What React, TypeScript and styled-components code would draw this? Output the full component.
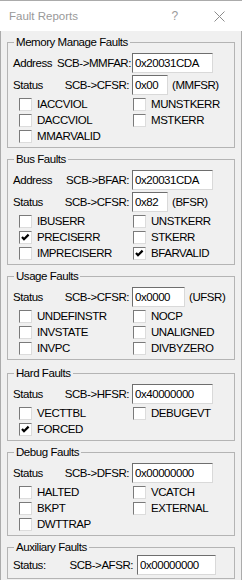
import React from 'react'
import styled, { createGlobalStyle } from 'styled-components'

const GlobalStyle = createGlobalStyle`
  html, body {
    margin: 0;
    padding: 0;
    background: #f0f0f0;
  }
  body {
    font-family: "Liberation Sans", Arial, sans-serif;
    font-size: 11.5px;
    color: #000;
  }
`

type Field = { name: string; reg: string; value: string; width: number; suffix?: string }
type Flag = { label: string; checked?: boolean }
type GroupData = {
  title: string
  fields: Field[]
  flags: Flag[]
  keyWidth?: number
  spaceAbove?: number
  tight?: boolean
}

const groups: GroupData[] = [
  {
    title: 'Memory Manage Faults',
    spaceAbove: 0,
    fields: [
      { name: 'Address', reg: 'SCB->MMFAR:', value: '0x20031CDA', width: 81 },
      { name: 'Status', reg: 'SCB->CFSR:', value: '0x00', width: 36, suffix: '(MMFSR)' },
    ],
    flags: [
      { label: 'IACCVIOL' },
      { label: 'MUNSTKERR' },
      { label: 'DACCVIOL' },
      { label: 'MSTKERR' },
      { label: 'MMARVALID' },
    ],
  },
  {
    title: 'Bus Faults',
    fields: [
      { name: 'Address', reg: 'SCB->BFAR:', value: '0x20031CDA', width: 81 },
      { name: 'Status', reg: 'SCB->CFSR:', value: '0x82', width: 36, suffix: '(BFSR)' },
    ],
    flags: [
      { label: 'IBUSERR' },
      { label: 'UNSTKERR' },
      { label: 'PRECISERR', checked: true },
      { label: 'STKERR' },
      { label: 'IMPRECISERR' },
      { label: 'BFARVALID', checked: true },
    ],
  },
  {
    title: 'Usage Faults',
    fields: [{ name: 'Status', reg: 'SCB->CFSR:', value: '0x0000', width: 53, suffix: '(UFSR)' }],
    flags: [
      { label: 'UNDEFINSTR' },
      { label: 'NOCP' },
      { label: 'INVSTATE' },
      { label: 'UNALIGNED' },
      { label: 'INVPC' },
      { label: 'DIVBYZERO' },
    ],
  },
  {
    title: 'Hard Faults',
    spaceAbove: 13,
    fields: [{ name: 'Status', reg: 'SCB->HFSR:', value: '0x40000000', width: 81 }],
    flags: [{ label: 'VECTTBL' }, { label: 'DEBUGEVT' }, { label: 'FORCED', checked: true }],
  },
  {
    title: 'Debug Faults',
    fields: [{ name: 'Status', reg: 'SCB->DFSR:', value: '0x00000000', width: 81 }],
    flags: [
      { label: 'HALTED' },
      { label: 'VCATCH' },
      { label: 'BKPT' },
      { label: 'EXTERNAL' },
      { label: 'DWTTRAP' },
    ],
  },
  {
    title: 'Auxiliary Faults',
    keyWidth: 76,
    tight: true,
    fields: [{ name: 'Status:', reg: 'SCB->AFSR:', value: '0x00000000', width: 79 }],
    flags: [],
  },
]

const Window = styled.div`
  width: 242px;
  height: 580px;
  display: flex;
  flex-direction: column;
  background: #f0f0f0;
  overflow: hidden;
  letter-spacing: -0.45px;
`

const TitleBar = styled.div`
  height: 30px;
  flex: none;
  border-top: 1px solid #ababab;
  background: #fff;
  display: flex;
  align-items: center;
  padding-left: 9px;
`

const Title = styled.div`
  flex: 1;
  color: #999;
  font-size: 11.5px;
  letter-spacing: 0;
`

const CaptionButton = styled.div`
  width: 45px;
  height: 30px;
  display: flex;
  align-items: center;
  justify-content: center;
  color: #9a9a9a;
  font-size: 12px;
`

const Body = styled.div`
  flex: 1;
  border-left: 1px solid #ababab;
  border-right: 1px solid #ababab;
  padding: 11px 6px 0 6px;
  display: flex;
  flex-direction: column;
`

const Group = styled.div<{ $spaceAbove: number }>`
  margin-top: ${({ $spaceAbove }) => $spaceAbove}px;
  border: 1px solid #b4b4b4;
  padding: 0 5px 3px 5px;
  display: flex;
  flex-direction: column;
`

const Legend = styled.div<{ $tight?: boolean }>`
  align-self: flex-start;
  margin: -7px 0 ${({ $tight }) => ($tight ? 1 : 4)}px 1px;
  padding: 0 2px;
  line-height: 13px;
  height: 13px;
  background: #f0f0f0;
`

const FieldRow = styled.div`
  display: flex;
  align-items: center;
  height: 20px;
  & + & {
    margin-top: 2px;
  }
`

const FieldName = styled.span`
  width: 44px;
  flex: none;
`

const RegName = styled.span<{ $width: number }>`
  width: ${({ $width }) => $width}px;
  flex: none;
  text-align: right;
  white-space: nowrap;
`

const ValueBox = styled.input<{ $width: number; $gap: number }>`
  box-sizing: border-box;
  width: ${({ $width }) => $width}px;
  height: 20px;
  margin: 0 0 0 ${({ $gap }) => $gap}px;
  padding: 0 0 0 2px;
  border: 1px solid;
  border-color: #6e6e6e #d9d9d9 #d9d9d9 #6e6e6e;
  background: #fff;
  font-family: "Liberation Sans", Arial, sans-serif;
  font-size: 11.5px;
  letter-spacing: -0.45px;
  color: #000;
  outline: none;
`

const Suffix = styled.span`
  margin-left: 4px;
`

const FlagGrid = styled.div`
  display: grid;
  grid-template-columns: 114px 1fr;
  grid-auto-rows: 16px;
  margin: 1px 0 0 6px;
`

const FlagItem = styled.label`
  display: flex;
  align-items: center;
  gap: 5px;
  white-space: nowrap;
`

const Box = styled.span`
  box-sizing: border-box;
  width: 13px;
  height: 13px;
  flex: none;
  border: 1px solid;
  border-color: #7a7a7a #dcdcdc #dcdcdc #7a7a7a;
  background: #fff;
  display: flex;
`

function CheckMark() {
  return (
    <svg width="11" height="11" viewBox="0 0 11 11">
      <polyline points="2,5 4,7.2 8.6,2.6" fill="none" stroke="#000" strokeWidth="2.2" />
    </svg>
  )
}

function CloseGlyph() {
  return (
    <svg width="11" height="11" viewBox="0 0 11 11">
      <path d="M0.5 0.5 L10.5 10.5 M10.5 0.5 L0.5 10.5" stroke="#8c8c8c" strokeWidth="1" />
    </svg>
  )
}

function FaultGroup({ group }: { group: GroupData }) {
  const keyWidth = group.keyWidth ?? 72
  const gap = group.keyWidth ? 4 : 3
  return (
    <Group $spaceAbove={group.spaceAbove ?? 11}>
      <Legend $tight={group.tight}>{group.title}</Legend>
      {group.fields.map((f) => (
        <FieldRow key={f.reg}>
          <FieldName>{f.name}</FieldName>
          <RegName $width={keyWidth}>{f.reg}</RegName>
          <ValueBox $width={f.width} $gap={gap} value={f.value} readOnly />
          {f.suffix && <Suffix>{f.suffix}</Suffix>}
        </FieldRow>
      ))}
      {group.flags.length > 0 && (
        <FlagGrid>
          {group.flags.map((flag) => (
            <FlagItem key={flag.label}>
              <Box>{flag.checked && <CheckMark />}</Box>
              {flag.label}
            </FlagItem>
          ))}
        </FlagGrid>
      )}
    </Group>
  )
}

export default function App() {
  return (
    <>
      <GlobalStyle />
      <Window>
        <TitleBar>
          <Title>Fault Reports</Title>
          <CaptionButton>?</CaptionButton>
          <CaptionButton>
            <CloseGlyph />
          </CaptionButton>
        </TitleBar>
        <Body>
          {groups.map((g) => (
            <FaultGroup key={g.title} group={g} />
          ))}
        </Body>
      </Window>
    </>
  )
}
